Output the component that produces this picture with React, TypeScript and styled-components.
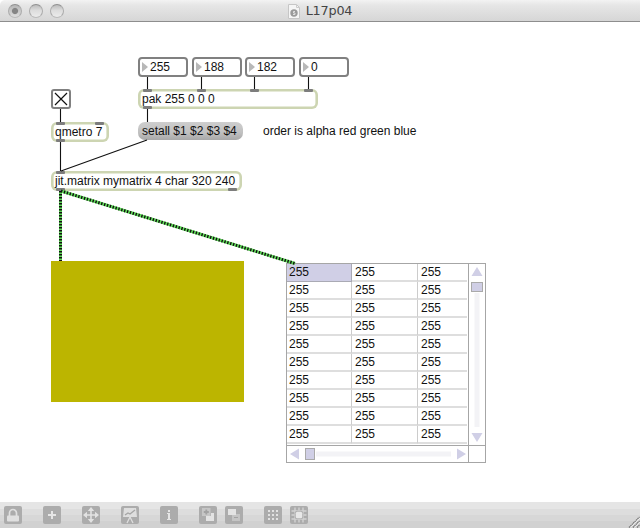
import React from 'react';
import styled, { createGlobalStyle } from 'styled-components';

const GlobalStyle = createGlobalStyle`
  * { box-sizing: border-box; }
  body { margin: 0; background: #fff; overflow: hidden; }
`;

const Window = styled.div`
  width: 640px;
  height: 528px;
  display: flex;
  flex-direction: column;
  background: #fff;
  color: #111;
  font: 12px/14px "Liberation Sans", Arial, sans-serif;
  white-space: pre;
`;

const TitleBar = styled.header`
  display: grid;
  grid-template-columns: 1fr auto 1fr;
  align-items: center;
  height: 22px;
  flex: none;
  padding: 0 8px;
  border-bottom: 1px solid #8e8e8e;
  border-top-left-radius: 5px;
  background: linear-gradient(#f3f3f3 0, #e6e6e6 25%, #d6d6d6 100%);
`;

const Lights = styled.div`
  display: flex;
  gap: 7px;
`;

const Light = styled.span<{ $dirty?: boolean }>`
  width: 14px;
  height: 14px;
  border-radius: 50%;
  border: 1px solid #ababab;
  border-top-color: #909090;
  border-bottom-color: #bababa;
  background: ${p => p.$dirty
    ? 'radial-gradient(circle, #858585 0 2.6px, transparent 3.6px), linear-gradient(#b5b5b5, #dedede)'
    : 'linear-gradient(#bcbcbc, #dcdcdc 45%, #ececec)'};
`;

const Title = styled.div`
  display: flex;
  align-items: center;
  gap: 6px;
  height: 21px;
  color: #444;
  font: 12.8px/21px "DejaVu Sans", sans-serif;
  letter-spacing: -0.2px;
`;

const Canvas = styled.main`
  position: relative;
  flex: 1;
`;

const Cords = styled.svg`
  position: absolute;
  left: 0;
  top: -22px;
  pointer-events: none;
`;

type Place = { $x: number; $y: number; $w: number };

const Node = styled.div<Place>`
  position: absolute;
  left: ${p => p.$x}px;
  top: ${p => p.$y - 22}px;
  width: ${p => p.$w}px;
  height: 20px;
`;

const NumberBox = styled(Node)`
  display: flex;
  align-items: center;
  gap: 2px;
  padding-left: 2px;
  border: 2px solid #808080;
  border-radius: 4px;
  background: #fff;
`;

const Arrow = styled.span`
  border-left: 6px solid #b8b8b8;
  border-top: 5px solid transparent;
  border-bottom: 5px solid transparent;
`;

const ObjectFrame = styled(Node)`
  display: grid;
  grid-template-rows: 3px 14px 3px;
  border-radius: 6px;
  background: #fff;
  box-shadow: inset 0 0 0 2.6px #cdd5b2;
`;

const Label = styled.span`
  padding-left: 4px;
`;

const Ports = styled.div<{ $gap: number }>`
  display: flex;
  gap: ${p => p.$gap}px;
  padding-left: 5px;
`;

const Port = styled.i`
  width: 9px;
  height: 3px;
  border-radius: 1px;
  background: #7d7d7d;
`;

const Message = styled(Node)`
  height: 18px;
  padding: 2px 4px;
  border-radius: 7px;
  background: linear-gradient(#cecece, #c0c0c0 60%, #a8a8a8);
`;

const Comment = styled(Node)`
  padding-top: 3px;
`;

const Toggle = styled(Node)`
  border: 2px solid #808080;
  border-radius: 3px;
  background: #fff;
  svg { display: block; }
`;

const Pwindow = styled(Node)`
  height: 141px;
  background: #bcb500;
`;

const CellBlock = styled(Node)`
  display: grid;
  grid-template: 181px 16px / 181px 16px;
  gap: 1px;
  height: 200px;
  border: 1px solid #a6a6a6;
  background: #a6a6a6;
  > * { background: #fff; }
`;

const Cells = styled.div`
  display: grid;
  grid-template-columns: 65px 66px 49px;
  grid-auto-rows: 18px;
`;

const Cell = styled.div<{ $selected?: boolean; $column: number }>`
  padding: 1px 0 0 ${p => (p.$column === 0 ? 2 : 3)}px;
  border-bottom: ${p => (p.$selected ? '1px solid #aaaab4' : '2px solid #dedede')};
  border-right: ${p => (p.$column === 2 ? '0' : p.$selected ? '1px solid #aaaab4' : '1px solid #cccccc')};
  background: ${p => (p.$selected ? '#d0cfe6' : '#fff')};
`;

const Tools = styled.footer`
  display: flex;
  flex: none;
  align-items: flex-start;
  height: 26px;
  padding: 4px 0 0 4px;
  background: linear-gradient(#e5e5e5 0 7px, #dddddd 7px 13px, #d7d7d7 13px 19px, #d1d1d1 19px);
`;

const Tool = styled.span<{ $gap: number }>`
  width: 18px;
  height: 18px;
  margin-right: ${p => p.$gap}px;
  border-radius: 2px;
  background: #acacac;
  svg { display: block; }
`;

const Grip = styled.svg`
  margin: 9px 0 0 auto;
`;

type ObjectBoxProps = Place & { text: string; inlets: number; inletGap?: number; outlets: number; outletGap?: number };

function ObjectBox({ text, inlets, inletGap = 0, outlets, outletGap = 0, ...place }: ObjectBoxProps) {
  return (
    <ObjectFrame {...place}>
      <Ports $gap={inletGap}>{Array.from({ length: inlets }, (_, i) => <Port key={i} />)}</Ports>
      <Label>{text}</Label>
      <Ports $gap={outletGap}>{Array.from({ length: outlets }, (_, i) => <Port key={i} />)}</Ports>
    </ObjectFrame>
  );
}

const numbers = [[138, '255'], [192, '188'], [245, '182'], [299, '0']] as const;

const icons: { gap: number; art: React.ReactNode }[] = [
  { gap: 21, art: <><path d="M5.5 10V7a3.5 3.5 0 0 1 7 0v3" fill="none" stroke="#e0e0e0" strokeWidth="1.7" /><rect x="3" y="9.5" width="12" height="6" rx="1" fill="#e0e0e0" /></> },
  { gap: 21, art: <path d="M9 5v8M5 9h8" stroke="#e6e6e6" strokeWidth="2" /> },
  { gap: 21, art: <><path d="M9 3v12M3 9h12" stroke="#e2e2e2" strokeWidth="1.6" /><path d="M9 1l3.2 4H5.8zM9 17l3.2-4H5.8zM1 9l4-3.2v6.4zM17 9l-4-3.2v6.4z" fill="#e2e2e2" /></> },
  { gap: 21, art: <><path d="M3 2h12l1 9H2z" fill="#dedede" /><path d="M4 9l3-2 2 1 5-4" fill="none" stroke="#a5a5a5" strokeWidth="1.3" /><path d="M9 11l-3 6M9 11l3 6" stroke="#dedede" strokeWidth="1.3" /></> },
  { gap: 21, art: <path d="M8 4h2v2H8zM7 7h3v6h1v1H7v-1h1V8H7z" fill="#e6e6e6" /> },
  { gap: 8, art: <><path d="M12 7h3v8H7v-5h5z" fill="#e3e3e3" /><rect x="3" y="2" width="8.5" height="8" fill="#c6c6c6" /><path d="M7.3 3.5v5M4.8 6h5" stroke="#a2a2a2" strokeWidth="1.8" /></> },
  { gap: 21, art: <><rect x="7" y="8" width="8" height="7" fill="#c4c4c4" /><path d="M9 11.5h4" stroke="#a2a2a2" /><rect x="3" y="3" width="8" height="6" fill="#e3e3e3" /></> },
  { gap: 8, art: [4, 8, 12].map(y => [4, 8, 12].map(x => <rect key={`${x}-${y}`} x={x} y={y} width="2" height="2" fill="#e2e2e2" />)) },
  { gap: 0, art: <><path d="M5 1.5v15M9 1.5v15M13 1.5v15M1.5 5h15M1.5 9h15M1.5 13h15" stroke="#d2d2d2" strokeWidth="1.4" /><rect x="4.7" y="4.7" width="8.6" height="8.6" rx="2.5" fill="#b2b2b2" /><rect x="5.8" y="5.8" width="6.4" height="6.4" rx="1.5" fill="#e8e8e8" /></> },
];

export default function App() {
  return (
    <>
      <GlobalStyle />
      <Window>
        <TitleBar>
          <Lights><Light $dirty /><Light /><Light /></Lights>
          <Title>
            <svg width="12" height="16" viewBox="0 0 12 16">
              <path d="M.5 1.5h8l3 3v11H.5z" fill="#f5f5f5" stroke="#c6c6c6" />
              <path d="M8.5 1.5v3h3" fill="none" stroke="#ccc" />
              <circle cx="6" cy="10" r="3.7" fill="#9a9a9a" />
              <path d="M7 8.5H5.5V10H7v1.5H5" fill="none" stroke="#e0e0e0" />
            </svg>
            L17p04
          </Title>
        </TitleBar>
        <Canvas>
          {numbers.map(([x, value]) => (
            <NumberBox key={x} $x={x} $y={57} $w={50}><Arrow />{value}</NumberBox>
          ))}
          <ObjectBox $x={138} $y={89} $w={180} text="pak 255 0 0 0" inlets={4} inletGap={44.7} outlets={1} />
          <Toggle $x={51} $y={89} $w={20}>
            <svg width="16" height="16"><path d="M2 2l12 12M14 2L2 14" stroke="#111" strokeWidth="1.2" /></svg>
          </Toggle>
          <ObjectBox $x={51} $y={122} $w={58} text="qmetro 7" inlets={2} inletGap={30} outlets={1} />
          <Message $x={138} $y={122} $w={105}>setall $1 $2 $3 $4</Message>
          <Comment $x={263} $y={121} $w={160}>order is alpha red green blue</Comment>
          <ObjectBox $x={51} $y={171} $w={191} text="jit.matrix mymatrix 4 char 320 240" inlets={1} outlets={2} outletGap={163} />
          <Pwindow $x={51} $y={261} $w={193} />
          <CellBlock $x={286} $y={263} $w={200}>
            <Cells>
              {Array.from({ length: 30 }, (_, i) => (
                <Cell key={i} $selected={i === 0} $column={i % 3}>255</Cell>
              ))}
            </Cells>
            <svg width="16" height="181">
              <path d="M8 3l5.5 9h-11zM8 178l5.5-9h-11z" fill="#d0cfe6" />
              <rect x="5.5" y="29" width="5" height="134" fill="#f3f3f6" />
              <rect x="2.5" y="18.5" width="11" height="9" fill="#d0cfe6" stroke="#aaa" />
            </svg>
            <svg width="181" height="16">
              <path d="M3 8l9-5.5v11zM179 8l-9-5.5v11z" fill="#d0cfe6" />
              <rect x="29" y="5.5" width="135" height="5" fill="#f3f3f6" />
              <rect x="18.5" y="2.5" width="9" height="11" fill="#d0cfe6" stroke="#aaa" />
            </svg>
            <div />
          </CellBlock>
          <Cords width="640" height="300">
            <path d="M147.5 77v12M201.5 77v12M254.5 77v12M308.5 77v12M147.5 109v13M60.5 109v13M60.5 142v29M147 140L61 171" stroke="#111" fill="none" strokeWidth="1.1" />
            <path d="M60.5 191V261M61 191L295 263.5" stroke="#5fdc58" strokeWidth="3" />
            <path d="M60.5 191V261M61 191L295 263.5" stroke="#111" strokeWidth="3" strokeDasharray="1.4 1.6" />
          </Cords>
        </Canvas>
        <Tools>
          {icons.map((icon, i) => (
            <Tool key={i} $gap={icon.gap}><svg width="18" height="18">{icon.art}</svg></Tool>
          ))}
          <Grip width="12" height="13">
            <path d="M1 12.5L11.5 2M5 12.5l7-7M9 12.5l3-3" stroke="#757575" strokeWidth="1.2" strokeDasharray="1.4 .6" />
            <path d="M2.5 12.5L12 3M6.5 12.5L12 7" stroke="#f3f3f3" strokeWidth=".8" />
          </Grip>
        </Tools>
      </Window>
    </>
  );
}
